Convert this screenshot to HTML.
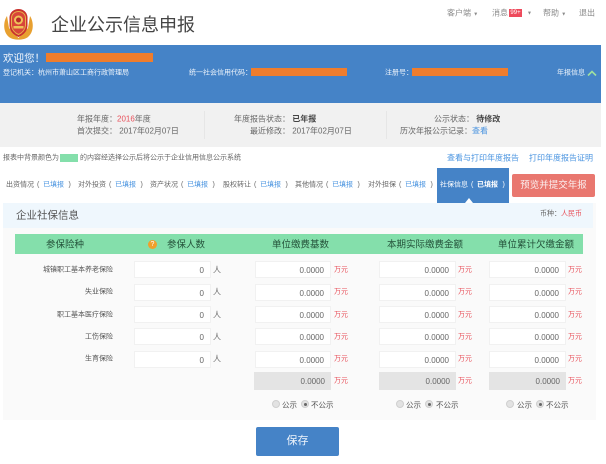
<!DOCTYPE html>
<html lang="zh"><head><meta charset="utf-8"><title>企业公示信息申报</title>
<style>
html,body{margin:0;padding:0;background:#fff}
body{position:relative;width:606px;height:464px;overflow:hidden;font-family:"Liberation Sans","Noto Sans CJK SC",sans-serif;color:#666;font-size:8px;filter:blur(.3px)}
div{position:absolute}
.t{white-space:nowrap;line-height:12px;height:12px;transform:translateY(1.5px)}
.nb{transform:none}
.w{color:#eef4fb;font-size:7px}
.o{background:#ef7d2d}
.b{color:#4a94e0}
.r{color:#e8505a}
.inp{background:#fff;border:1px solid #f1f1f1;box-sizing:border-box;height:17px;text-align:right;line-height:18px;font-size:8px;color:#666;padding-right:6px}
.gr{background:#e4e4e4;border:0;height:18px;line-height:20px}
.lb{font-size:7px;color:#555;text-align:right;width:80px;left:33px}
.wy{font-size:7px;color:#e8505a}
.ren{font-size:8px;color:#666}
.hd{font-size:9.500px;color:#24523a}
.tab{font-size:7px;color:#666}
.tab i{font-style:normal;margin:0 3.700px 0 3px}
.tab u{text-decoration:none;margin-left:4.500px}
.ra{width:6px;height:6px;border-radius:50%;background:#e2e2e2;border:1px solid #cfcfcf}
.ra.on:after{content:"";position:absolute;left:1.500px;top:1.500px;width:3px;height:3px;border-radius:50%;background:#666}
.rt{font-size:7.500px;color:#555}
</style></head><body>

<svg style="position:absolute;left:3px;top:8px" width="31" height="33" viewBox="0 0 31 33">
<path d="M4 8C0 14 0 24 6 29C10 32.500 21 32.500 25 29C31 24 31 14 27 8L25 20L15.500 30L6 20Z" fill="#e8a030"/>
<path d="M15.500 1C20 1 24 4 24.500 9V18C24 24 20 27 15.500 29C11 27 7 24 6.500 18V9C7 4 11 1 15.500 1Z" fill="#c9322e"/>
<path d="M15.500 3.500C19 3.500 22.500 6 22.500 10V17.500C22 22 19 25 15.500 26.500C12 25 9 22 8.500 17.500V10C8.500 6 12 3.500 15.500 3.500Z" fill="#d8453a" stroke="#e8b04a" stroke-width="1"/>
<circle cx="15.500" cy="12" r="4.500" fill="#efc35a"/><circle cx="15.500" cy="12" r="2.500" fill="#b72a2a"/>
<rect x="10.500" y="18" width="10" height="2.500" fill="#efc35a"/>
</svg>
<div class="t nb" style="left:51px;top:15px;height:20px;line-height:20px;font-size:18px;color:#444">企业公示信息申报</div>

<div class="t" style="left:447px;top:6px;color:#8a8a8a">客户端 <span style="font-size:5px">▼</span></div>
<div class="t" style="left:492px;top:6px;color:#8a8a8a">消息</div>
<div class="t nb" style="left:509px;top:9px;width:13px;height:8px;line-height:8px;background:#ee4a5c;color:#fff;font-size:6px;text-align:center">99+</div>
<div class="t" style="left:527px;top:6px;color:#8a8a8a;font-size:5px">▼</div>
<div class="t" style="left:543px;top:6px;color:#8a8a8a">帮助 <span style="font-size:5px">▼</span></div>
<div class="t" style="left:579px;top:6px;color:#8a8a8a">退出</div>

<div style="left:0;top:45px;width:601px;height:58px;background:#4583c7"></div>
<div class="t" style="left:3px;top:51px;font-size:10.500px;color:#f2f6fb">欢迎您！</div>
<div class="o" style="left:46px;top:53px;width:107px;height:9px"></div>
<div class="t w" style="left:3px;top:66px">登记机关：杭州市萧山区工商行政管理局</div>
<div class="t w" style="left:189px;top:66px">统一社会信用代码：</div>
<div class="o" style="left:251px;top:68px;width:96px;height:8px"></div>
<div class="t w" style="left:385px;top:66px">注册号：</div>
<div class="o" style="left:412px;top:68px;width:96px;height:8px"></div>
<div class="t w" style="left:557px;top:66px">年报信息</div>
<svg style="position:absolute;left:587px;top:70px" width="10" height="7" viewBox="0 0 10 7"><path d="M1 5.500L5 1.500L9 5.500" fill="none" stroke="#9fe0a0" stroke-width="1.600"/></svg>

<div style="left:0;top:103px;width:601px;height:44px;background:#f1f1f1"></div>
<div style="left:204px;top:111px;width:1px;height:28px;background:#e6e6e6"></div>
<div style="left:386px;top:111px;width:1px;height:28px;background:#e6e6e6"></div>
<div class="t" style="left:77px;top:112px">年报年度：<span class="r">2016</span>年度</div>
<div class="t" style="left:77px;top:124px">首次提交： 2017年02月07日</div>
<div class="t" style="left:234px;top:112px">年度报告状态： <b style="color:#444">已年报</b></div>
<div class="t" style="left:250px;top:124px">最近修改： 2017年02月07日</div>
<div class="t" style="left:434px;top:112px">公示状态： <b style="color:#444">待修改</b></div>
<div class="t" style="left:400px;top:124px">历次年报公示记录：<span class="b">查看</span></div>

<div class="t" style="left:3px;top:151px;font-size:7px">报表中背景颜色为</div>
<div style="left:60px;top:154px;width:18px;height:8px;background:#84dfab"></div>
<div class="t" style="left:80px;top:151px;font-size:7px">的内容经选择公示后将公示于企业信用信息公示系统</div>
<div class="t b" style="left:447px;top:151px">查看与打印年度报告</div>
<div class="t b" style="left:529px;top:151px">打印年度报告证明</div>

<div class="t tab" style="left:6px;top:178px">出资情况<i>(</i><span class="b">已填报</span><u>)</u></div>
<div class="t tab" style="left:78px;top:178px">对外投资<i>(</i><span class="b">已填报</span><u>)</u></div>
<div class="t tab" style="left:150px;top:178px">资产状况<i>(</i><span class="b">已填报</span><u>)</u></div>
<div class="t tab" style="left:223px;top:178px">股权转让<i>(</i><span class="b">已填报</span><u>)</u></div>
<div class="t tab" style="left:295px;top:178px">其他情况<i>(</i><span class="b">已填报</span><u>)</u></div>
<div class="t tab" style="left:368px;top:178px">对外担保<i>(</i><span class="b">已填报</span><u>)</u></div>
<div style="left:437px;top:168px;width:72px;height:35px;background:#4583c7"></div>
<div class="t tab" style="left:440px;top:178px;color:#fff">社保信息<i>(</i><b>已填报</b><u>)</u></div>
<div class="t nb" style="left:512px;top:174px;width:83px;height:23px;line-height:23px;background:#e9776f;color:#fbeeee;font-size:9.500px;text-align:center;border-radius:2px">预览并提交年报</div>

<div style="left:3px;top:203px;width:593px;height:217px;background:#fafafa"></div>
<div style="left:3px;top:203px;width:590px;height:25px;background:#eff7fd"></div>
<svg style="position:absolute;left:465px;top:198px" width="8" height="5" viewBox="0 0 8 5"><path d="M0 5L4 0L8 5Z" fill="#fff"/></svg>
<div class="t" style="left:16px;top:208px;font-size:10.500px;color:#555">企业社保信息</div>
<div class="t" style="left:540px;top:207px;font-size:7px">币种：<span class="r">人民币</span></div>

<div style="left:15px;top:234px;width:568px;height:20px;background:#84dfab"></div>
<div class="t hd" style="left:46px;top:238px">参保险种</div>
<div style="left:148px;top:240px;width:9px;height:9px;border-radius:50%;background:#f0a02c;color:#fff;font-size:7px;line-height:9px;text-align:center">?</div>
<div class="t hd" style="left:167px;top:238px">参保人数</div>
<div class="t hd" style="left:272px;top:238px">单位缴费基数</div>
<div class="t hd" style="left:387px;top:238px">本期实际缴费金额</div>
<div class="t hd" style="left:498px;top:238px">单位累计欠缴金额</div>

<div class="t lb" style="top:263px">城镇职工基本养老保险</div>
<div class="t lb" style="top:285px">失业保险</div>
<div class="t lb" style="top:308px">职工基本医疗保险</div>
<div class="t lb" style="top:330px">工伤保险</div>
<div class="t lb" style="top:352px">生育保险</div>

<div class="inp" style="left:134px;top:261px;width:77px">0</div><div class="t ren" style="left:213px;top:263px">人</div>
<div class="inp" style="left:134px;top:284px;width:77px">0</div><div class="t ren" style="left:213px;top:285px">人</div>
<div class="inp" style="left:134px;top:306px;width:77px">0</div><div class="t ren" style="left:213px;top:308px">人</div>
<div class="inp" style="left:134px;top:328px;width:77px">0</div><div class="t ren" style="left:213px;top:330px">人</div>
<div class="inp" style="left:134px;top:351px;width:77px">0</div><div class="t ren" style="left:213px;top:352px">人</div>

<div class="inp" style="left:255px;top:261px;width:76px">0.0000</div><div class="t wy" style="left:334px;top:263px">万元</div>
<div class="inp" style="left:255px;top:284px;width:76px">0.0000</div><div class="t wy" style="left:334px;top:285px">万元</div>
<div class="inp" style="left:255px;top:306px;width:76px">0.0000</div><div class="t wy" style="left:334px;top:308px">万元</div>
<div class="inp" style="left:255px;top:328px;width:76px">0.0000</div><div class="t wy" style="left:334px;top:330px">万元</div>
<div class="inp" style="left:255px;top:351px;width:76px">0.0000</div><div class="t wy" style="left:334px;top:352px">万元</div>
<div class="inp gr" style="left:254px;top:372px;width:77px">0.0000</div><div class="t wy" style="left:334px;top:374px">万元</div>

<div class="inp" style="left:379px;top:261px;width:77px">0.0000</div><div class="t wy" style="left:458px;top:263px">万元</div>
<div class="inp" style="left:379px;top:284px;width:77px">0.0000</div><div class="t wy" style="left:458px;top:285px">万元</div>
<div class="inp" style="left:379px;top:306px;width:77px">0.0000</div><div class="t wy" style="left:458px;top:308px">万元</div>
<div class="inp" style="left:379px;top:328px;width:77px">0.0000</div><div class="t wy" style="left:458px;top:330px">万元</div>
<div class="inp" style="left:379px;top:351px;width:77px">0.0000</div><div class="t wy" style="left:458px;top:352px">万元</div>
<div class="inp gr" style="left:379px;top:372px;width:77px">0.0000</div><div class="t wy" style="left:458px;top:374px">万元</div>

<div class="inp" style="left:489px;top:261px;width:77px">0.0000</div><div class="t wy" style="left:568px;top:263px">万元</div>
<div class="inp" style="left:489px;top:284px;width:77px">0.0000</div><div class="t wy" style="left:568px;top:285px">万元</div>
<div class="inp" style="left:489px;top:306px;width:77px">0.0000</div><div class="t wy" style="left:568px;top:308px">万元</div>
<div class="inp" style="left:489px;top:328px;width:77px">0.0000</div><div class="t wy" style="left:568px;top:330px">万元</div>
<div class="inp" style="left:489px;top:351px;width:77px">0.0000</div><div class="t wy" style="left:568px;top:352px">万元</div>
<div class="inp gr" style="left:489px;top:372px;width:77px">0.0000</div><div class="t wy" style="left:568px;top:374px">万元</div>

<div class="ra" style="left:272px;top:400px"></div><div class="t rt" style="left:282px;top:398px">公示</div>
<div class="ra on" style="left:301px;top:400px"></div><div class="t rt" style="left:311px;top:398px">不公示</div>
<div class="ra" style="left:396px;top:400px"></div><div class="t rt" style="left:406px;top:398px">公示</div>
<div class="ra on" style="left:425px;top:400px"></div><div class="t rt" style="left:436px;top:398px">不公示</div>
<div class="ra" style="left:506px;top:400px"></div><div class="t rt" style="left:517px;top:398px">公示</div>
<div class="ra on" style="left:536px;top:400px"></div><div class="t rt" style="left:546px;top:398px">不公示</div>

<div class="t nb" style="left:256px;top:427px;width:83px;height:29px;line-height:29px;background:#4583c7;color:#eef4fb;font-size:11px;text-align:center;border-radius:2px">保存</div>
</body></html>
